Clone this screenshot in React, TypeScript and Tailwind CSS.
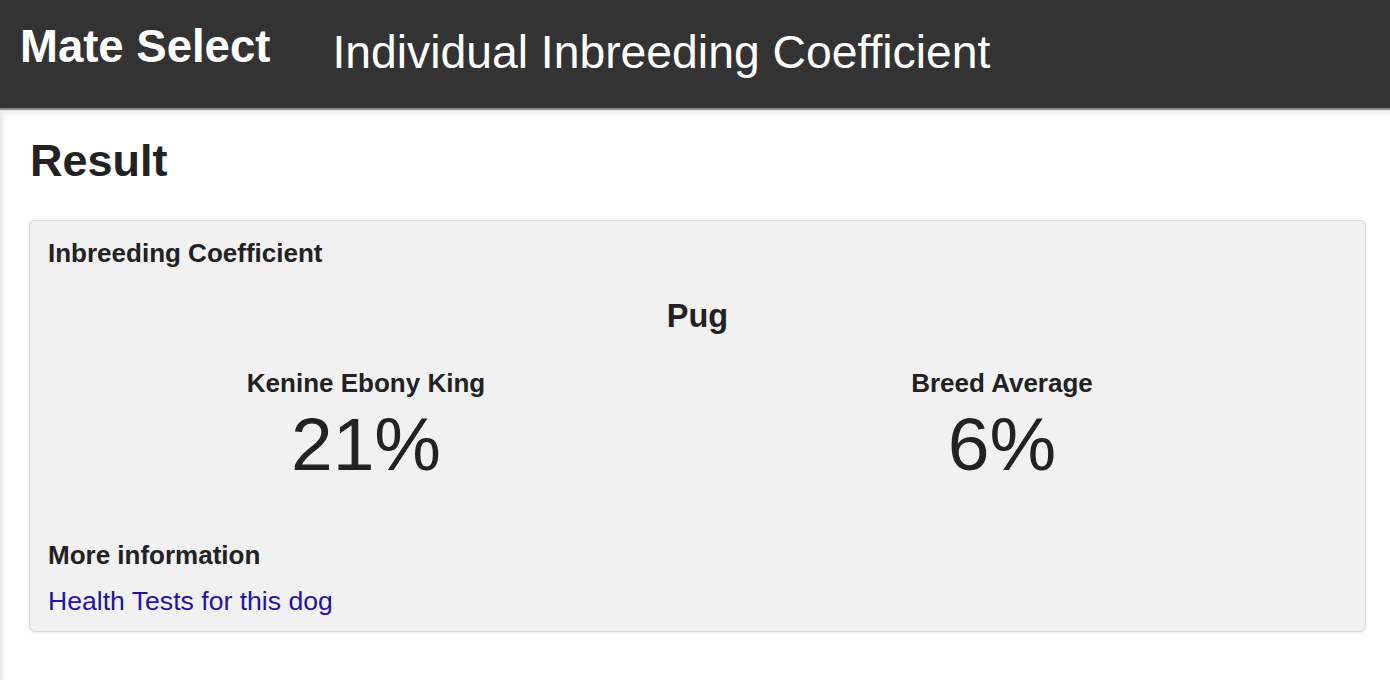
import React from "react";

export default function App() {
  const font = { fontFamily: '"Liberation Sans", Arial, Helvetica, sans-serif' };
  return (
    <div className="w-[1390px] h-[680px] bg-white overflow-hidden text-[#222]" style={font}>
      <header className="h-[110px] bg-[#333333] border-b-2 border-[#8c8c8c] flex items-start">
        <div className="ml-[20px] mt-[24px] text-[45.5px] leading-none font-bold text-white">
          Mate Select
        </div>
        <div className="ml-[62px] mt-[29px] text-[46.3px] leading-none text-white">
          Individual Inbreeding Coefficient
        </div>
      </header>
      <main className="h-[570px] pl-[29px] pr-[24px] shadow-[inset_4px_4px_5px_-1px_rgba(0,0,0,0.09)] flex flex-col">
        <h1 className="mt-[28px] ml-[1px] text-[45px] leading-none font-bold">Result</h1>
        <section className="mt-[37px] w-[1337px] bg-[#f1f1f1] border border-[#d5d5d5] rounded-[6px] shadow-[0_1px_2px_rgba(0,0,0,0.08)] pt-[19px] pb-[17px] pl-[18px] pr-[18px] flex flex-col">
          <div className="text-[26px] leading-none font-bold">Inbreeding Coefficient</div>
          <div className="mt-[34px] text-center text-[32.5px] leading-none font-bold">Pug</div>
          <div className="mt-[37px] flex">
            <div className="w-[636px] flex flex-col items-center">
              <div className="text-[26px] leading-none font-bold">Kenine Ebony King</div>
              <div className="mt-[11px] text-[75px] leading-none">21%</div>
            </div>
            <div className="w-[636px] flex flex-col items-center">
              <div className="text-[26px] leading-none font-bold">Breed Average</div>
              <div className="mt-[11px] text-[75px] leading-none">6%</div>
            </div>
          </div>
          <div className="mt-[60px] text-[26px] leading-none font-bold">More information</div>
          <a href="#" className="mt-[20px] text-[26.6px] leading-none text-[#2414a0] self-start">
            Health Tests for this dog
          </a>
        </section>
      </main>
    </div>
  );
}
